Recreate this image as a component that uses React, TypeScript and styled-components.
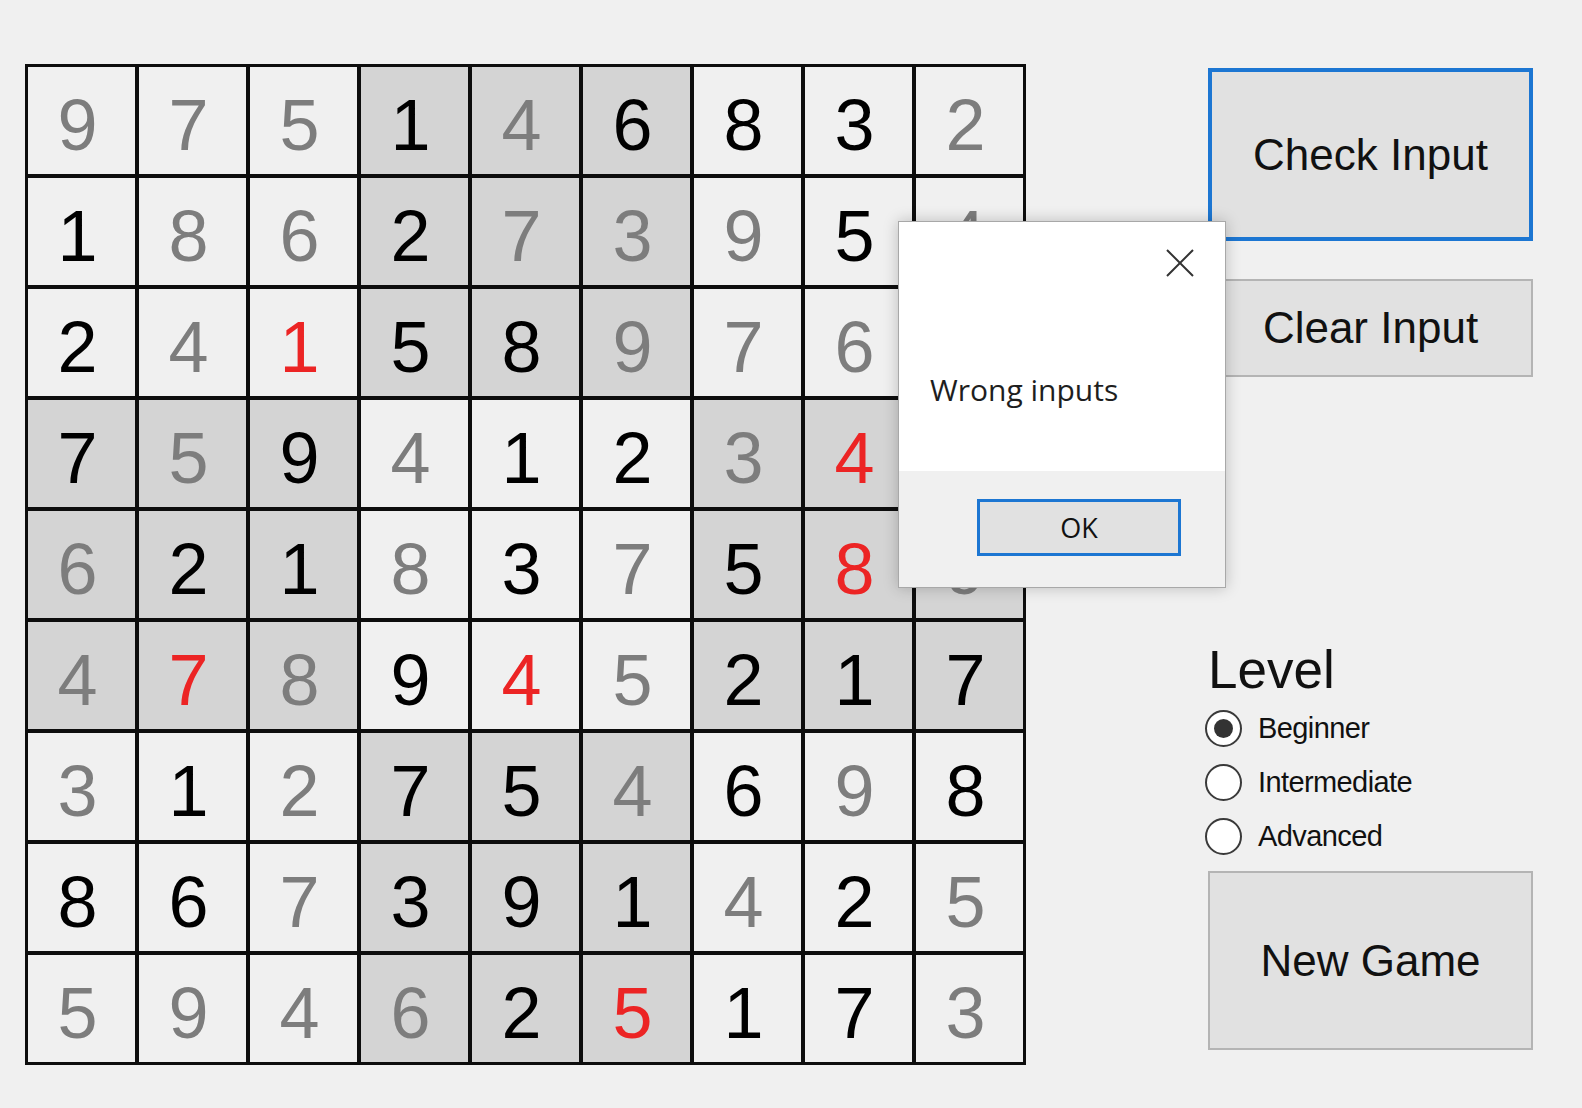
import React from 'react';
import styled, { createGlobalStyle } from 'styled-components';

const GlobalStyle = createGlobalStyle`
  body {
    margin: 0;
    background: #f0f0f0;
  }
`;

type Tone = 'given' | 'entered' | 'wrong';

const toneColor: Record<Tone, string> = {
  given: '#000000',
  entered: '#7d7d7d',
  wrong: '#ec2424',
};

// b = given (black), g = entered (gray), r = wrong (red), "--" = hidden behind the dialog
const rows = [
  '9g7g5g1b4g6b8b3b2g',
  '1b8g6g2b7g3g9g5b4g',
  '2b4g1r5b8b9g7g6g--',
  '7b5g9b4g1b2b3g4r--',
  '6g2b1b8g3b7g5b8r9g',
  '4g7r8g9b4r5g2b1b7b',
  '3g1b2g7b5b4g6b9g8b',
  '8b6b7g3b9b1b4g2b5g',
  '5g9g4g6g2b5r1b7b3g',
];

const codeTone: Record<string, Tone> = { b: 'given', g: 'entered', r: 'wrong', '-': 'entered' };

const Page = styled.div`
  position: relative;
  display: flex;
  align-items: flex-start;
  box-sizing: border-box;
  min-height: 100vh;
  padding: 64px 0 0 25px;
  font-family: 'Liberation Sans', Arial, sans-serif;
`;

const Board = styled.div`
  display: grid;
  grid-template-columns: repeat(9, 107px);
  grid-auto-rows: 107px;
  gap: 4px;
  padding: 3px;
  background: #0d0d0d;
`;

const Cell = styled.div<{ $dark: boolean; $tone: Tone }>`
  display: flex;
  align-items: center;
  justify-content: center;
  box-sizing: border-box;
  padding: 8px 8px 0 0;
  background: ${({ $dark }) => ($dark ? '#d4d4d4' : '#f0f0f0')};
  color: ${({ $tone }) => toneColor[$tone]};
  font-family: 'Liberation Sans', Arial, sans-serif;
  font-size: 72px;
`;

const Side = styled.div`
  display: flex;
  flex-direction: column;
  width: 325px;
  margin: 4px 0 0 182px;
`;

const PanelButton = styled.button<{ $focused?: boolean; $height: number }>`
  box-sizing: border-box;
  width: 100%;
  height: ${({ $height }) => $height}px;
  padding: 0;
  border: ${({ $focused }) => ($focused ? '4px solid #1c76d2' : '2px solid #b4b4b4')};
  background: #e1e1e1;
  color: #111;
  font-family: 'Liberation Sans', Arial, sans-serif;
  font-size: 44px;
`;

const ClearButton = styled(PanelButton)`
  margin-top: 38px;
`;

const LevelLabel = styled.div`
  margin-top: 266px;
  font-size: 53px;
  line-height: 1;
  color: #111;
`;

const RadioList = styled.div`
  display: flex;
  flex-direction: column;
  margin: 5px 0 0 -3px;
`;

const RadioRow = styled.label`
  display: flex;
  align-items: center;
  height: 54px;
  gap: 16px;
  font-size: 29px;
  letter-spacing: -0.6px;
  color: #111;
`;

const RadioCircle = styled.span<{ $checked: boolean }>`
  display: flex;
  align-items: center;
  justify-content: center;
  box-sizing: border-box;
  width: 37px;
  height: 37px;
  border: 2px solid #3a3a3a;
  border-radius: 50%;
  background: #fff;

  &::after {
    content: '';
    display: ${({ $checked }) => ($checked ? 'block' : 'none')};
    width: 19px;
    height: 19px;
    border-radius: 50%;
    background: #333;
  }
`;

const NewGameButton = styled(PanelButton)`
  margin-top: 8px;
`;

const Dialog = styled.div`
  position: absolute;
  left: 898px;
  top: 221px;
  box-sizing: border-box;
  width: 328px;
  height: 367px;
  display: flex;
  flex-direction: column;
  border: 1px solid #a8a8a8;
  background: #f0f0f0;
  box-shadow: 0 0 14px rgba(0, 0, 0, 0.22);
  font-family: 'Open Sans', 'Noto Sans', sans-serif;
`;

const DialogBody = styled.div`
  display: flex;
  flex-direction: column;
  box-sizing: border-box;
  height: 249px;
  padding: 27px 31px 0 31px;
  background: #fff;
`;

const CloseRow = styled.div`
  display: flex;
  justify-content: flex-end;
`;

const Message = styled.div`
  margin-top: 98px;
  font-size: 30px;
  line-height: 1;
  color: #1e1e1e;
`;

const DialogFooter = styled.div`
  display: flex;
  justify-content: flex-end;
  padding: 28px 44px 0 0;
`;

const OkButton = styled.button`
  box-sizing: border-box;
  width: 204px;
  height: 57px;
  border: 3px solid #1c76d2;
  background: #e1e1e1;
  color: #111;
  font-family: 'Open Sans', 'Noto Sans', sans-serif;
  font-size: 27px;
  padding: 0;
`;

const CloseIcon: React.FC = () => (
  <svg width="28" height="28" viewBox="0 0 28 28">
    <path d="M1 1 L27 27 M27 1 L1 27" stroke="#333" strokeWidth="2" fill="none" />
  </svg>
);

const levels = ['Beginner', 'Intermediate', 'Advanced'];

const App: React.FC = () => {
  return (
    <Page>
      <GlobalStyle />
      <Board>
        {rows.map((row, r) =>
          Array.from({ length: 9 }, (_, c) => {
            const digit = row[c * 2];
            const tone = codeTone[row[c * 2 + 1]];
            const dark = (Math.floor(r / 3) + Math.floor(c / 3)) % 2 === 1;
            return (
              <Cell key={`${r}-${c}`} $dark={dark} $tone={tone}>
                {digit === '-' ? null : digit}
              </Cell>
            );
          })
        )}
      </Board>
      <Side>
        <PanelButton $focused $height={173}>Check Input</PanelButton>
        <ClearButton $height={98}>Clear Input</ClearButton>
        <LevelLabel>Level</LevelLabel>
        <RadioList>
          {levels.map((level, i) => (
            <RadioRow key={level}>
              <RadioCircle $checked={i === 0} />
              {level}
            </RadioRow>
          ))}
        </RadioList>
        <NewGameButton $height={179}>New Game</NewGameButton>
      </Side>
      <Dialog>
        <DialogBody>
          <CloseRow>
            <CloseIcon />
          </CloseRow>
          <Message>Wrong inputs</Message>
        </DialogBody>
        <DialogFooter>
          <OkButton>OK</OkButton>
        </DialogFooter>
      </Dialog>
    </Page>
  );
};

export default App;
